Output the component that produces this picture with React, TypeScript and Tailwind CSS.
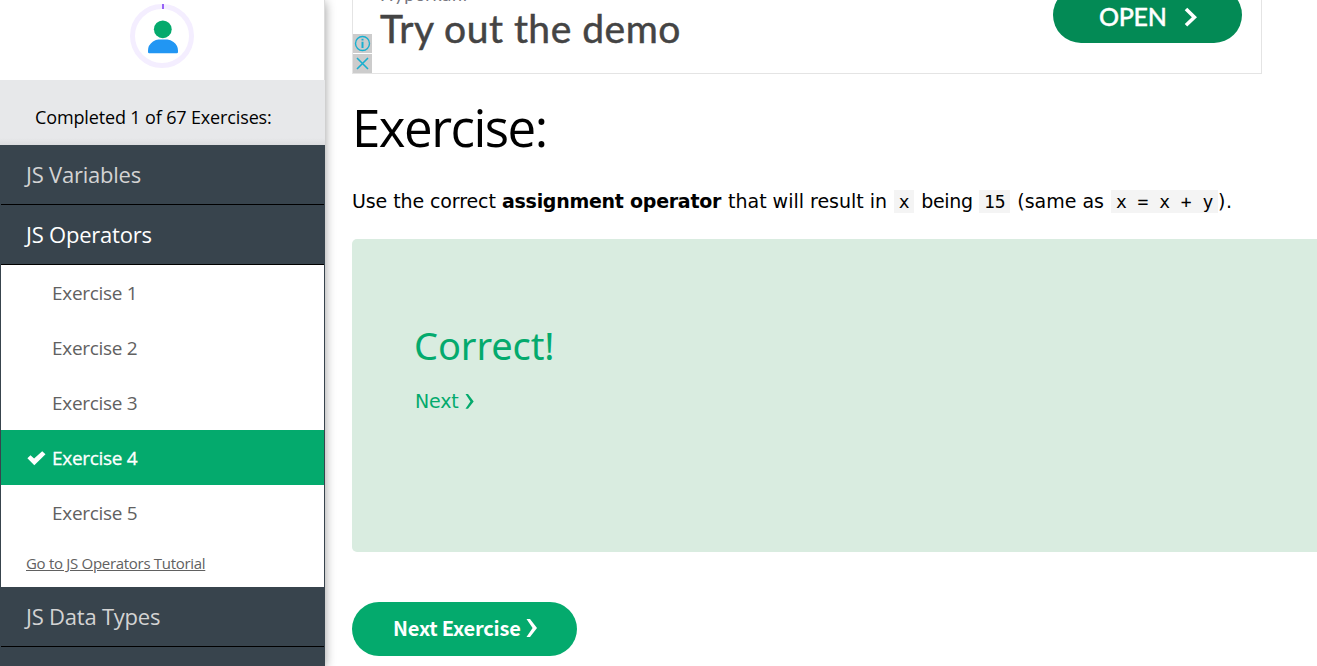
import React from "react";

const exercises = [1, 2, 3, 4, 5];

function Check() {
  return (
    <svg className="ml-px h-[15px] w-[19px]" viewBox="0 0 19 15" fill="currentColor">
      <path d="M0.4 7.3 3.5 4.2 7.1 7.6 15.2 0.3 18.5 3.3 7.3 14.3Z" />
    </svg>
  );
}

function Category({ children, active }: { children: React.ReactNode; active?: boolean }) {
  return (
    <div className={`mx-px flex h-[60px] shrink-0 items-center border-b border-black pl-[25px] text-[22px] tracking-[-0.22px] ${active ? "text-white" : "text-[#d3d3d3]"}`}>
      <span>{children}</span>
    </div>
  );
}

function Code({ children }: { children: React.ReactNode }) {
  return (
    <code className="h-[23px] bg-[#f4f4f4] px-[4.7px] font-['DejaVu_Sans_Mono',monospace] text-[18px] leading-[24px] tracking-[-0.02px]">{children}</code>
  );
}

function Sidebar() {
  return (
    <aside className="relative z-10 flex h-full w-[325px] shrink-0 flex-col overflow-visible font-['Open_Sans',sans-serif] shadow-[0_2px_10px_rgba(0,0,0,0.4)]">
      <div className="flex h-20 shrink-0 justify-center border-r border-[#dcdcdc] bg-white pt-1 pr-px">
        <svg className="h-16 w-16" viewBox="0 0 64 64">
          <circle cx="32" cy="32" r="29.5" fill="none" stroke="#f4eeff" strokeWidth="5" />
          <rect x="32" y="0" width="2" height="5" fill="#9763f6" />
          <circle cx="32.8" cy="25.3" r="8.9" fill="#04aa6d" />
          <path d="M18 48V46.5Q18 41 23 37.5Q26 35.5 28.5 35.5H37.5Q40.5 35.5 43.5 38Q48 41.5 48 46.5V48Q48 49.2 46.8 49.2H19.2Q18 49.2 18 48Z" fill="#2196f3" />
        </svg>
      </div>
      <div className="flex h-[65px] shrink-0 items-end bg-[#e7e8ea] bg-[linear-gradient(to_top,rgba(0,0,0,0.05),transparent_7px)] pb-[15px] pl-[35px] text-[18px] leading-[25px] tracking-[-0.14px] text-black">
        <span>Completed 1 of 67 Exercises:</span>
      </div>
      <nav className="flex min-h-0 flex-1 flex-col overflow-hidden bg-[#38444d]">
        <Category>JS Variables</Category>
        <Category active>JS Operators</Category>
        <div className="mx-px flex h-[322px] shrink-0 flex-col bg-white">
          {exercises.map((n) => (
            <div key={n} className={`flex h-[55px] items-center pt-[2px] pl-[25px] text-[19px] tracking-[-0.3px] ${n === 4 ? "bg-[#04aa6d] text-white [-webkit-text-stroke:0.3px_#fff]" : "text-[#616161]"}`}>
              <span className="flex w-[26px]">{n === 4 && <Check />}</span>
              <span>Exercise {n}</span>
            </div>
          ))}
          <div className="pt-[12px] pl-[25px] text-[15px] leading-[22px] tracking-[-0.3px] text-[#616161] underline">
            <span>Go to JS Operators Tutorial</span>
          </div>
        </div>
        <Category>JS Data Types</Category>
      </nav>
    </aside>
  );
}

function AdBanner() {
  return (
    <section className="relative flex h-[74px] w-[910px] shrink-0 justify-between overflow-hidden border-r border-b border-l border-[#e4e4e4] pr-[19px] pl-[27px] font-['Lato',sans-serif]">
      <div className="flex flex-col">
        <span className="-mt-[15px] h-[19px] text-[18px] leading-[18px] tracking-[0.7px] text-[#77777f]">Hyperkani</span>
        <span className="text-[39px] leading-[48px] tracking-[0.5px] text-[#444] [-webkit-text-stroke:0.5px_#444]">Try out the demo</span>
      </div>
      <button className="-mt-[13px] flex h-[56px] w-[189px] items-center rounded-full bg-[#038a55] pl-[46px] font-['Lato',sans-serif] text-[25px] font-medium text-white">
        <span className="mt-[3px] tracking-[-0.3px] [-webkit-text-stroke:0.4px_#fff]">OPEN</span>
        <svg className="mt-[4px] ml-[17px] h-5 w-[14px]" viewBox="0 0 14 20" fill="none" stroke="currentColor" strokeWidth="3.6">
          <path d="m2 2 8.4 8.2L2 18.2" />
        </svg>
      </button>
      <div className="absolute top-[34px] left-0 flex flex-col gap-px text-[#18afcf]">
        <svg className="h-[19px] w-[19px] bg-[#ccc]" viewBox="0 0 19 19" fill="none" stroke="currentColor">
          <circle cx="9.5" cy="9.5" r="7" strokeWidth="1.4" />
          <path d="M9.5 7.8V14M9.5 4.8v1.8" strokeWidth="2" />
        </svg>
        <svg className="h-[19px] w-[19px] bg-[#ccc]" viewBox="0 0 19 19" fill="none" stroke="currentColor" strokeWidth="1.6">
          <path d="m4 4 11 11M15 4 4 15" />
        </svg>
      </div>
    </section>
  );
}

export default function App() {
  return (
    <div className="flex h-screen overflow-hidden bg-white text-black">
      <Sidebar />
      <main className="flex min-w-0 flex-1 flex-col items-start pl-[27px]">
        <AdBanner />
        <h1 className="mt-[17px] h-[72px] shrink-0 font-['Open_Sans',sans-serif] text-[51px] leading-[72px] tracking-[-1.5px]">Exercise:</h1>
        <div className="mt-[27px] flex h-[23px] shrink-0 items-start font-['DejaVu_Sans',sans-serif] text-[19px] leading-[23px] whitespace-pre">
          <span className="w-[150px] tracking-[-0.1px]">Use the correct</span>
          <b className="w-[226px] tracking-[-0.27px]">assignment operator</b>
          <span className="w-[166px]">that will result in</span>
          <Code>x</Code>
          <span className="ml-[7px] w-[58px] tracking-[-0.3px]">being</span>
          <Code>15</Code>
          <span className="ml-[7px] w-[94px]">(same as</span>
          <Code>x = x + y</Code>
          <span className="tracking-[0.6px]">).</span>
        </div>
        <section className="mt-[26px] flex h-[313px] w-full shrink-0 flex-col items-start rounded-l-[5px] bg-[#d9ece0] pt-[78px] pl-[62px] text-[#04aa6d]">
          <h2 className="h-[56px] font-['Noto_Sans',sans-serif] text-[38px] leading-[56px] tracking-[-0.1px]">Correct!</h2>
          <a className="mt-[16px] ml-px flex h-6 items-center font-['DejaVu_Sans',sans-serif] text-[19px] leading-6">
            <span className="tracking-[-0.2px]">Next</span>
            <svg className="ml-[7px] h-[15px] w-[9px]" viewBox="0 0 9 15" fill="currentColor">
              <path d="M0.5 0H3L8.7 7.4 3 14.8H0.5L5.4 7.4Z" />
            </svg>
          </a>
        </section>
        <button className="mt-[50px] flex h-[54px] w-[225px] shrink-0 items-center rounded-full bg-[#04aa6d] pb-[2px] pl-[41px] font-['Noto_Sans_CJK_SC',sans-serif] text-[20px] font-bold text-white">
          <span className="tracking-[-0.2px]">Next Exercise</span>
          <svg className="ml-[5px] h-[18px] w-[12px]" viewBox="0 0 12 18" fill="currentColor">
            <path d="M0.5 0H4L11 9 4 18H0.5L6.6 9Z" />
          </svg>
        </button>
      </main>
    </div>
  );
}
